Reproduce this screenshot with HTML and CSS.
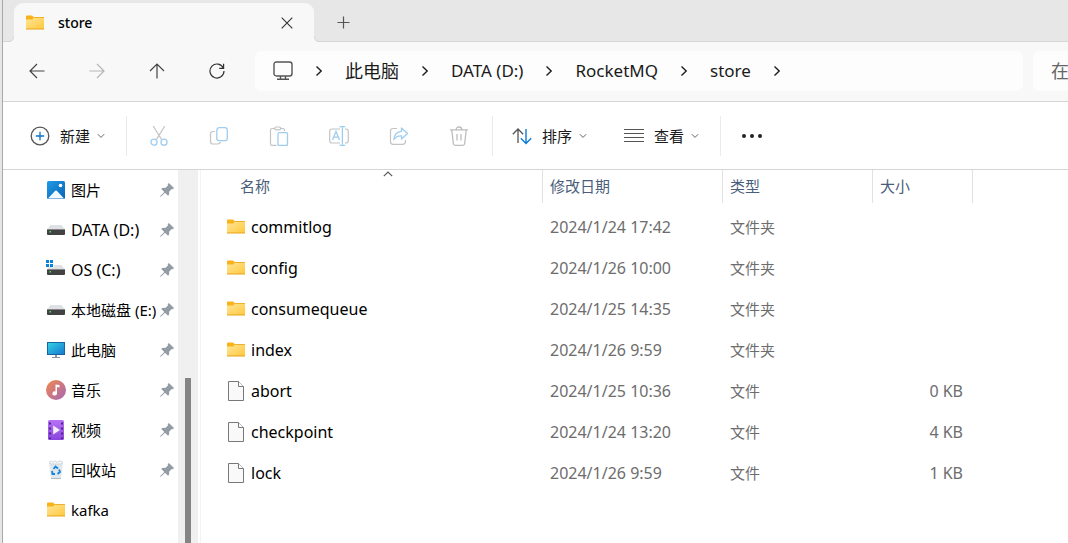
FILE: index.html
```html
<!DOCTYPE html>
<html lang="zh-CN">
<head>
<meta charset="utf-8">
<title>store</title>
<link rel="stylesheet" href="styles.css">
</head>
<body>
<svg class="sprite" aria-hidden="true">
  <defs>
    <linearGradient id="g-folder" x1="0" y1="0" x2="1" y2="1"><stop offset="0" stop-color="#ffe699"/><stop offset="1" stop-color="#ffc83d"/></linearGradient>
    <linearGradient id="g-pic" x1="0" y1="0" x2="1" y2="1"><stop offset="0" stop-color="#1f9be6"/><stop offset="1" stop-color="#0863b5"/></linearGradient>
    <linearGradient id="g-pc" x1="0" y1="0" x2="1" y2="1"><stop offset="0" stop-color="#35d3e3"/><stop offset="1" stop-color="#1577cf"/></linearGradient>
    <linearGradient id="g-music" x1="0" y1="0" x2="1" y2="1"><stop offset="0" stop-color="#f28a4b"/><stop offset="1" stop-color="#a565b8"/></linearGradient>
    <linearGradient id="g-video" x1="0" y1="0" x2="0" y2="1"><stop offset="0" stop-color="#b672f5"/><stop offset="1" stop-color="#8a45dd"/></linearGradient>
  </defs>
  <symbol id="folder" viewBox="0 0 18 15">
    <path d="M0 1.5Q0 .5 1 .5H6L8 2.2V5H0Z" fill="#f8b31a"/>
    <path d="M0 4.6H6.5L8 2.3H18V14H0Z" fill="url(#g-folder)"/>
    <path d="M8 2.5H18" stroke="#efb02c"/>
    <path d="M0 14H18" stroke="#e8a317"/>
  </symbol>
  <symbol id="file" viewBox="0 0 18 20">
    <path d="M1.5.5H11.5L16.5 5.5V19.5H1.5Z" fill="#f9f9f9" stroke="#787878"/>
    <path d="M11.5.5V5.5H16.5" fill="#fff" stroke="#787878"/>
  </symbol>
  <symbol id="pin" viewBox="0 0 14 14">
    <path d="M8.8 0 14 5 12.6 6.3 11.8 6 9.3 8.4 8.9 12 8 12.7 5 9.7 1 13.4 0 14 .5 12.8 4.3 9 1.3 6 2.1 5.1 5.7 4.7 8.1 2.2 7.7 1.3Z" fill="#939ca5"/>
  </symbol>
  <symbol id="drive" viewBox="0 0 20 20">
    <path d="M4.5 5H15.5L19 9.5H1Z" fill="#dfe1e4"/>
    <path d="M1 9H19V14Q19 15 18 15H2Q1 15 1 14Z" fill="#424242"/>
    <path d="M1 9.5H19" stroke="#858585"/>
    <path d="M3.5 11H5V12.5H3.5Z" fill="#52e05c"/>
  </symbol>
  <symbol id="chev-r" viewBox="0 0 8 12"><path d="M1.5 1.5 6.2 6 1.5 10.5" fill="none" stroke="#1d1d1d" stroke-width="1.4"/></symbol>
  <symbol id="chev-d" viewBox="0 0 8 6"><path d="M.8 1.2 4 4.4 7.2 1.2" fill="none" stroke="#666"/></symbol>
</svg>

<div class="window">
  <header class="titlebar">
    <div class="tab">
      <svg class="i-folder"><use href="#folder"/></svg>
      <span class="tab-title">store</span>
      <button class="plain" aria-label="关闭标签页"><svg width="12" height="12" viewBox="0 0 12 12"><path d="M.7.7 11.3 11.3M11.3.7.7 11.3" fill="none" stroke="#333" stroke-width="1.1"/></svg></button>
    </div>
    <button class="plain new-tab" aria-label="新建标签页"><svg width="13" height="13" viewBox="0 0 13 13"><path d="M6.5.5V12.5M.5 6.5H12.5" fill="none" stroke="#555" stroke-width="1.2"/></svg></button>
  </header>

  <div class="navbar">
    <nav class="history">
      <button class="plain" aria-label="后退"><svg width="16" height="16" viewBox="0 0 16 16"><path d="M15.5 8H1M8 1 1 8 8 15" fill="none" stroke="#444" stroke-width="1.2"/></svg></button>
      <button class="plain" aria-label="前进" disabled><svg width="16" height="16" viewBox="0 0 16 16"><path d="M.5 8H15M8 1 15 8 8 15" fill="none" stroke="#b5b5b5" stroke-width="1.2"/></svg></button>
      <button class="plain" aria-label="上移"><svg width="16" height="16" viewBox="0 0 16 16"><path d="M8 15.5V1M1 8 8 1 15 8" fill="none" stroke="#444" stroke-width="1.2"/></svg></button>
      <button class="plain" aria-label="刷新"><svg width="16" height="16" viewBox="0 0 16 16"><path d="M14.4 5.2A7 7 0 1 0 15 8M14.6.8V5.3H10.2" fill="none" stroke="#333" stroke-width="1.2"/></svg></button>
    </nav>
    <nav class="address" aria-label="地址">
      <svg width="20" height="20" viewBox="0 0 20 20"><path d="M3.500 1H16.500Q19 1 19 3.500V12.500Q19 15 16.500 15H3.500Q1 15 1 12.500V3.500Q1 1 3.500 1ZM7.500 15V18M12.500 15V18M4 18.300H16" fill="none" stroke="#555" stroke-width="1.400"/></svg>
      <svg class="i-chev"><use href="#chev-r"/></svg>
      <a class="cjk" href="#">此电脑</a>
      <svg class="i-chev"><use href="#chev-r"/></svg>
      <a href="#">DATA (D:)</a>
      <svg class="i-chev"><use href="#chev-r"/></svg>
      <a href="#">RocketMQ</a>
      <svg class="i-chev"><use href="#chev-r"/></svg>
      <a href="#">store</a>
      <svg class="i-chev"><use href="#chev-r"/></svg>
    </nav>
    <input class="search" type="text" aria-label="搜索" placeholder="在">
  </div>

  <div class="toolbar">
    <div class="group group-new">
      <button class="tool"><svg width="20" height="20" viewBox="0 0 20 20"><circle cx="10" cy="10" r="8.800" fill="none" stroke="#555" stroke-width="1.300"/><path d="M10 5.800V14.200M5.800 10H14.200" stroke="#0a74cc" stroke-width="1.300"/></svg><span>新建</span><svg class="i-down"><use href="#chev-d"/></svg></button>
    </div>
    <div class="group group-edit">
      <button class="tool" aria-label="剪切" disabled><svg width="20" height="20" viewBox="0 0 20 20" fill="none"><path d="M4.200 0 12.500 13.400M15.800 0 7.500 13.400" stroke="#c4c4c4" stroke-width="1.200"/><circle cx="5" cy="16.200" r="3" stroke="#9fcdf0" stroke-width="1.300"/><circle cx="15" cy="16.200" r="3" stroke="#9fcdf0" stroke-width="1.300"/></svg></button>
      <button class="tool" aria-label="复制" disabled><svg width="20" height="20" viewBox="0 0 20 20" fill="none"><path d="M5.800 5.500H4Q1.500 5.500 1.500 8V15.500Q1.500 18 4 18H8.500Q11 18 11.300 16" stroke="#c4c4c4" stroke-width="1.200"/><rect x="7.800" y="1.700" width="10.500" height="13" rx="2.500" stroke="#9fcdf0" stroke-width="1.300"/></svg></button>
      <button class="tool" aria-label="粘贴" disabled><svg width="20" height="20" viewBox="0 0 20 20" fill="none"><path d="M6 2.500H3Q1.500 2.500 1.500 4V18Q1.500 19.300 3 19.300H7.500M11 2.500H14Q15.500 2.500 15.500 5" stroke="#c4c4c4" stroke-width="1.200"/><rect x="5.700" y="1" width="6" height="2.800" rx="1.400" stroke="#c4c4c4" stroke-width="1.200"/><rect x="9" y="6.700" width="9.500" height="12.800" rx="1.300" stroke="#9fcdf0" stroke-width="1.300"/></svg></button>
      <button class="tool" aria-label="重命名" disabled><svg width="20" height="20" viewBox="0 0 20 20" fill="none"><path d="M11 3H3Q.7 3 .7 5.300V14.500Q.7 17 3 17H11M15.800 3H17Q19.300 3 19.300 5.300V14.500Q19.300 17 17 17H15.800" stroke="#c4c4c4" stroke-width="1.200"/><path d="M3.500 14 7 5.500 10.500 14M4.800 11.200H9.200M10.500.7H16.200M10.500 19.300H16.200M13.400.7V19.300" stroke="#9fcdf0" stroke-width="1.300"/></svg></button>
      <button class="tool" aria-label="共享" disabled><svg width="20" height="20" viewBox="0 0 20 20" fill="none"><path d="M8 2.500H4Q1.500 2.500 1.500 5V15.500Q1.500 18.300 4 18.300H13.500Q16.500 18.300 16.500 15.500V14" stroke="#c4c4c4" stroke-width="1.200"/><path d="M12.500 2 18.500 7.500 12.500 13V9.800Q7.500 9.500 4.800 13.500 5.500 6 12.500 5.300Z" stroke="#9fcdf0" stroke-width="1.300" stroke-linejoin="round"/></svg></button>
      <button class="tool" aria-label="删除" disabled><svg width="20" height="20" viewBox="0 0 20 20" fill="none"><path d="M1 3.800H19M7.300 3.500Q7.300 1 10 1T12.700 3.500M2.800 4 4.300 17.500Q4.500 19.300 6.300 19.300H13.700Q15.500 19.300 15.700 17.500L17.200 4M8 8V14.500M12 8V14.500" stroke="#bdbdbd" stroke-width="1.300"/></svg></button>
    </div>
    <div class="group group-view">
      <button class="tool"><svg width="20" height="20" viewBox="0 0 20 20" fill="none"><path d="M6 17V3M.8 8.200 6 3 11.200 8.200" stroke="#555" stroke-width="1.300"/><path d="M14 3V17.500M8.800 12.300 14 17.500 19.200 12.300" stroke="#0a7bdc" stroke-width="1.400"/></svg><span>排序</span><svg class="i-down"><use href="#chev-d"/></svg></button>
      <button class="tool"><svg width="20" height="20" viewBox="0 0 20 20"><path d="M0 3.500H20M0 7.500H20M0 11.500H20M0 15.500H20" stroke="#555" stroke-width="1.200"/></svg><span>查看</span><svg class="i-down"><use href="#chev-d"/></svg></button>
    </div>
    <div class="group group-more">
      <button class="tool" aria-label="更多"><svg width="22" height="20" viewBox="0 0 22 20" fill="#222"><circle cx="3" cy="10" r="2"/><circle cx="11" cy="10" r="2"/><circle cx="19" cy="10" r="2"/></svg></button>
    </div>
  </div>

  <main class="content">
    <nav class="sidebar" aria-label="导航窗格">
      <a href="#"><svg class="i-side" viewBox="0 0 20 20"><rect x="1" y="1" width="18" height="18" rx="1.500" fill="url(#g-pic)"/><path d="M2 18.500 9.200 10.800Q10 10 10.800 10.800L18 18.500Z" fill="#f3faff"/><circle cx="14.500" cy="5.500" r="1.800" fill="#fff"/></svg><span>图片</span><svg class="i-pin"><use href="#pin"/></svg></a>
      <a href="#"><svg class="i-side"><use href="#drive"/></svg><span class="latin">DATA (D:)</span><svg class="i-pin"><use href="#pin"/></svg></a>
      <a href="#"><svg class="i-side" viewBox="0 0 20 20"><use href="#drive" width="20" height="20"/><path d="M0 -1H8V7H0Z" fill="#fff"/><path d="M0 0H3V3H0ZM4 0H7V3H4ZM0 4H3V7H0ZM4 4H7V7H4Z" fill="#0a84d8"/></svg><span class="latin">OS (C:)</span><svg class="i-pin"><use href="#pin"/></svg></a>
      <a href="#"><svg class="i-side"><use href="#drive"/></svg><span>本地磁盘 (E:)</span><svg class="i-pin"><use href="#pin"/></svg></a>
      <a href="#"><svg class="i-side" viewBox="0 0 20 20"><path d="M9 14H11V17H14V18H6V17H9Z" fill="#8296a5"/><rect x="1.500" y="2.500" width="17" height="12" fill="url(#g-pc)" stroke="#1565a3"/></svg><span>此电脑</span><svg class="i-pin"><use href="#pin"/></svg></a>
      <a href="#"><svg class="i-side" viewBox="0 0 20 20"><circle cx="10" cy="10" r="10" fill="url(#g-music)"/><path d="M9.500 4.500 13.500 5V7.500L11 7V13.500A2.300 2.100 0 1 1 9.500 11.500Z" fill="#fff"/></svg><span>音乐</span><svg class="i-pin"><use href="#pin"/></svg></a>
      <a href="#"><svg class="i-side" viewBox="0 0 20 20"><rect x="2" width="16" height="20" rx="1.500" fill="url(#g-video)"/><path d="M4 2.500V19M16 2.500V19" stroke="#472078" stroke-width="1.800" stroke-dasharray="2 3"/><path d="M7.200 5.500 14 10 7.200 14.500Z" fill="#f5edff"/></svg><span>视频</span><svg class="i-pin"><use href="#pin"/></svg></a>
      <a href="#"><svg class="i-side" viewBox="0 0 20 20"><path d="M3 2.500H17L15 19H5Z" fill="#e2e7eb"/><path d="M3 2.500 5 1 7 2.200 9 .8 11 2.200 14 .8 17 2.500 15 4H5Z" fill="#f8f8f8" stroke="#c2c8cd" stroke-width=".7"/><path d="M5 18.500H15" stroke="#b5bbc0"/><path d="M7.500 9 9.500 6.500 12 8.500M13 9.500 14 12 11.500 14M9 14H6.500L6 11" fill="none" stroke="#1684dc" stroke-width="1.900"/></svg><span>回收站</span><svg class="i-pin"><use href="#pin"/></svg></a>
      <a href="#"><svg class="i-side" viewBox="0 0 20 20"><use href="#folder" x="1" y="2" width="18" height="15"/></svg><span>kafka</span></a>
    </nav>
    <div class="scrollbar"><div class="thumb"></div></div>
    <section class="files">
      <table>
        <colgroup><col class="c-name"><col class="c-date"><col class="c-type"><col class="c-size"><col></colgroup>
        <thead>
          <tr><th class="h-name">名称<svg class="sort" width="10" height="6" viewBox="0 0 10 6"><path d="M.8 5.200 5 1 9.200 5.200" fill="none" stroke="#555" stroke-width="1.100"/></svg></th><th>修改日期</th><th>类型</th><th>大小</th><td></td></tr>
        </thead>
        <tbody>
          <tr><td><div class="name"><svg class="i-folder"><use href="#folder"/></svg>commitlog</div></td><td class="latin">2024/1/24 17:42</td><td>文件夹</td><td></td></tr>
          <tr><td><div class="name"><svg class="i-folder"><use href="#folder"/></svg>config</div></td><td class="latin">2024/1/26 10:00</td><td>文件夹</td><td></td></tr>
          <tr><td><div class="name"><svg class="i-folder"><use href="#folder"/></svg>consumequeue</div></td><td class="latin">2024/1/25 14:35</td><td>文件夹</td><td></td></tr>
          <tr><td><div class="name"><svg class="i-folder"><use href="#folder"/></svg>index</div></td><td class="latin">2024/1/26 9:59</td><td>文件夹</td><td></td></tr>
          <tr><td><div class="name"><svg class="i-file"><use href="#file"/></svg>abort</div></td><td class="latin">2024/1/25 10:36</td><td>文件</td><td class="latin size">0 KB</td></tr>
          <tr><td><div class="name"><svg class="i-file"><use href="#file"/></svg>checkpoint</div></td><td class="latin">2024/1/24 13:20</td><td>文件</td><td class="latin size">4 KB</td></tr>
          <tr><td><div class="name"><svg class="i-file"><use href="#file"/></svg>lock</div></td><td class="latin">2024/1/26 9:59</td><td>文件</td><td class="latin size">1 KB</td></tr>
        </tbody>
      </table>
    </section>
  </main>
</div>
</body>
</html>
```
FILE: styles.css
```css
* { box-sizing: border-box; }
body {
  margin: 0;
  overflow: hidden;
  background: #e6e6e6;
  color: #000;
  font: 15px/20px "Noto Sans", "Noto Sans CJK SC", sans-serif;
}
svg { display: block; flex: none; }
a { color: inherit; text-decoration: none; }
.sprite { position: absolute; width: 0; height: 0; }
.plain, .tool {
  display: flex;
  align-items: center;
  justify-content: center;
  border: 0;
  padding: 0;
  background: none;
  font: inherit;
  color: #1a1a1a;
}
.latin { font-size: 16px; }
.i-folder { width: 18px; height: 15px; }
.i-file { width: 18px; height: 20px; }
.i-side { width: 20px; height: 20px; }
.i-pin { width: 14px; height: 14px; }
.i-chev { width: 8px; height: 12px; }
.i-down { width: 8px; height: 6px; }

.window {
  display: flex;
  flex-direction: column;
  min-height: 100vh;
  margin-left: 2px;
  border-left: 1px solid #a9a9a9;
  background: #fff;
}

.titlebar {
  display: flex;
  align-items: stretch;
  height: 42px;
  padding: 3px 0 0 11px;
  border-bottom: 1px solid #d6d6d6;
  background: #e7e7e7;
}
.tab {
  position: relative;
  display: flex;
  align-items: center;
  width: 300px;
  margin-bottom: -1px;
  padding: 0 21px 0 12px;
  border-radius: 9px 9px 0 0;
  background: #f8f8f8;
}
.tab::before, .tab::after {
  content: "";
  position: absolute;
  bottom: 0;
  width: 5px;
  height: 5px;
  border-bottom: 1px solid #d6d6d6;
}
.tab::before {
  right: 100%;
  border-right: 1px solid #dcdcdc;
  border-bottom-right-radius: 5px;
  box-shadow: 2px 2px 0 #f8f8f8;
}
.tab::after {
  left: 100%;
  border-left: 1px solid #dcdcdc;
  border-bottom-left-radius: 5px;
  box-shadow: -2px 2px 0 #f8f8f8;
}
.tab-title { flex: 1; margin-left: 14px; font-weight: 500; font-size: 14px; }
.new-tab { width: 58px; }

.navbar {
  display: flex;
  align-items: center;
  height: 60px;
  padding-bottom: 1px;
  overflow: hidden;
  border-bottom: 1px solid #d5d5d5;
  background: #f8f8f8;
}
.history { display: flex; gap: 20px; padding: 0 18px 0 14px; }
.history .plain { width: 40px; height: 40px; }
.address {
  display: flex;
  flex: 1;
  align-items: center;
  gap: 22px;
  height: 40px;
  padding-left: 18px;
  border-radius: 6px;
  background: #fdfdfd;
  font-size: 17px;
  color: #1a1a1a;
}
.address .cjk { font-size: 18px; }
.search {
  flex: none;
  width: 200px;
  height: 40px;
  margin: 0 -165px 0 10px;
  padding: 0 0 0 18px;
  border: 0;
  border-radius: 6px;
  background: #fdfdfd;
  font: inherit;
  font-size: 18px;
  color: #666;
}
.search::placeholder { color: #666; }

.toolbar {
  display: flex;
  align-items: center;
  height: 68px;
  border-bottom: 1px solid #d5d5d5;
}
.group { display: flex; align-items: center; height: 40px; }
.group + .group { border-left: 1px solid #ebebeb; }
.tool { gap: 10px; }
.tool .i-down { margin-left: -3px; }
.group-new { padding: 0 21px 0 27px; }
.group-edit { gap: 40px; padding: 0 23px 0 22px; }
.group-view { gap: 37px; padding: 0 21px 0 19px; }
.group-more { padding-left: 20px; }

.content { display: flex; flex: 1; }
.sidebar { width: 175px; }
.sidebar a {
  display: flex;
  align-items: center;
  height: 40px;
  padding: 0 4px 0 43px;
  white-space: nowrap;
}
.sidebar span { flex: 1; min-width: 0; margin-left: 5px; }
.scrollbar {
  display: flex;
  justify-content: center;
  width: 20px;
  padding-top: 208px;
  background: #f0f0f0;
}
.thumb { width: 6px; background: #858585; }

.files { flex: 1; margin-left: 2px; border-left: 1px solid #f3f3f3; }
table { width: 100%; table-layout: fixed; border-collapse: separate; border-spacing: 0; }
.c-name { width: 342px; }
.c-date { width: 180px; }
.c-type { width: 150px; }
.c-size { width: 100px; }
th {
  position: relative;
  height: 33px;
  padding: 0 7px 2px;
  border-right: 1px solid #e2e2e2;
  text-align: left;
  font-weight: 400;
  color: #4a5d7a;
}
.h-name { padding-left: 39px; }
.sort { position: absolute; top: 1px; right: 149px; }
tbody::before { content: ""; display: block; height: 3px; }
tbody td { height: 41px; padding: 0 7px; color: #6d6d6d; }
.name {
  display: flex;
  align-items: center;
  gap: 6px;
  padding-left: 19px;
  font-size: 16px;
  color: #000;
}
tbody .size { padding-right: 10px; text-align: right; }
```
